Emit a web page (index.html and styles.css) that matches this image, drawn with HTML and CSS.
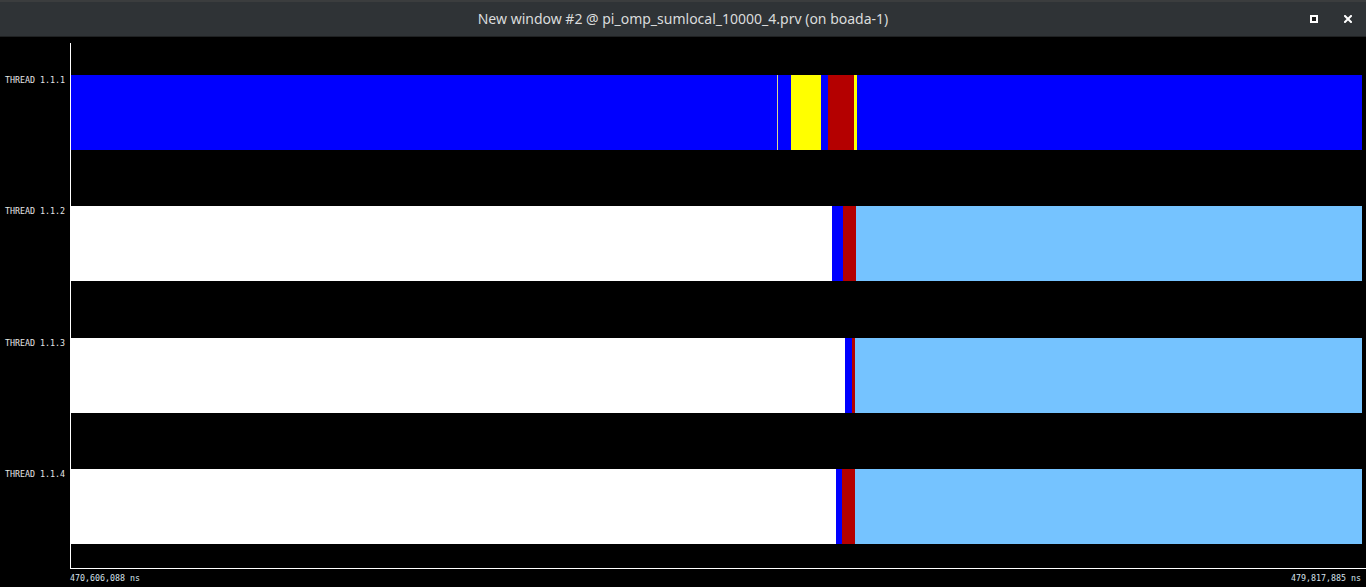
FILE: index.html
```html
<!DOCTYPE html>
<html>
<head>
<meta charset="utf-8">
<link rel="stylesheet" href="styles.css">
</head>
<body>
<div class="window">
  <header class="titlebar">
    <div class="title">New window #2 @ pi_omp_sumlocal_10000_4.prv (on boada-1)</div>
    <div class="controls">
      <span class="btn-max"></span>
      <svg class="btn-close" width="8" height="8" viewBox="0 0 8 8"><path d="M1 1 L7 7 M7 1 L1 7" stroke="#ffffff" stroke-width="2" stroke-linecap="square"/></svg>
    </div>
  </header>
  <main class="plot">
    <div class="labels">
      <div class="label">THREAD 1.1.1</div>
      <div class="label">THREAD 1.1.2</div>
      <div class="label">THREAD 1.1.3</div>
      <div class="label">THREAD 1.1.4</div>
    </div>
    <div class="area">
      <div class="bar">
        <span class="seg running" style="width:706px"></span>
        <span class="seg tick" style="width:1px"></span>
        <span class="seg running" style="width:13px"></span>
        <span class="seg sync" style="width:30px"></span>
        <span class="seg running" style="width:7px"></span>
        <span class="seg sched" style="width:26px"></span>
        <span class="seg sync" style="width:3px"></span>
        <span class="seg running rest"></span>
      </div>
      <div class="bar">
        <span class="seg idle" style="width:761px"></span>
        <span class="seg running" style="width:11px"></span>
        <span class="seg sched" style="width:13px"></span>
        <span class="seg wait rest"></span>
      </div>
      <div class="bar">
        <span class="seg idle" style="width:774px"></span>
        <span class="seg running" style="width:7px"></span>
        <span class="seg sched" style="width:3px"></span>
        <span class="seg wait rest"></span>
      </div>
      <div class="bar">
        <span class="seg idle" style="width:765px"></span>
        <span class="seg running" style="width:6px"></span>
        <span class="seg sched" style="width:13px"></span>
        <span class="seg wait rest"></span>
      </div>
    </div>
    <div class="spacer"></div>
    <div class="axis">
      <span>470,606,088 ns</span>
      <span>479,817,885 ns</span>
    </div>
  </main>
</div>
</body>
</html>
```

FILE: styles.css
```css
html, body {
  margin: 0;
  padding: 0;
  background: #000;
  width: 1366px;
  height: 587px;
  overflow: hidden;
}

.window {
  display: flex;
  flex-direction: column;
  height: 587px;
}

.titlebar {
  box-sizing: border-box;
  height: 37px;
  flex: none;
  background: #2f3336;
  border-top: 2px solid #3b3d3e;
  border-bottom: 1px solid #1f2122;
  display: flex;
  align-items: center;
  justify-content: center;
  position: relative;
}

.title {
  font-family: "Noto Sans", "DejaVu Sans", sans-serif;
  font-size: 14px;
  color: #dadcdc;
  margin-top: -2px;
}

.controls {
  position: absolute;
  right: 14px;
  top: 13px;
  display: flex;
  align-items: center;
  gap: 26px;
}

.btn-max {
  box-sizing: border-box;
  width: 8px;
  height: 8px;
  border: 2px solid #ffffff;
  background: #1a1a1a;
}

.btn-close {
  display: block;
}

.plot {
  flex: 1;
  display: grid;
  grid-template-columns: 70px 1fr;
  grid-template-rows: 526px 1fr;
  padding-top: 6px;
  font-family: "DejaVu Sans Mono", "Liberation Mono", monospace;
  font-size: 8.3px;
  color: #e6e6e6;
}

.labels {
  display: flex;
  flex-direction: column;
  justify-content: space-between;
  padding: 32px 0 25px 5px;
}

.label {
  height: 75px;
  line-height: 10px;
  padding-top: 0;
}

.area {
  box-sizing: border-box;
  border-left: 1px solid #ffffff;
  border-bottom: 1px solid #ffffff;
  display: flex;
  flex-direction: column;
  justify-content: space-between;
  padding: 32px 4px 24px 0;
}

.bar {
  height: 75px;
  display: flex;
}

.seg {
  flex: none;
  height: 100%;
}

.seg.rest {
  flex: 1;
}

.running { background: #0000ff; }
.idle { background: #ffffff; }
.wait { background: #75c3ff; }
.sched { background: #b40000; }
.sync { background: #ffff00; }
.tick { background: #d8d890; }

.spacer {
  grid-column: 1;
}

.axis {
  grid-column: 2;
  display: flex;
  justify-content: space-between;
  padding: 4px 5px 0 0;
  color: #d6e0ea;
  line-height: 10px;
}
```
